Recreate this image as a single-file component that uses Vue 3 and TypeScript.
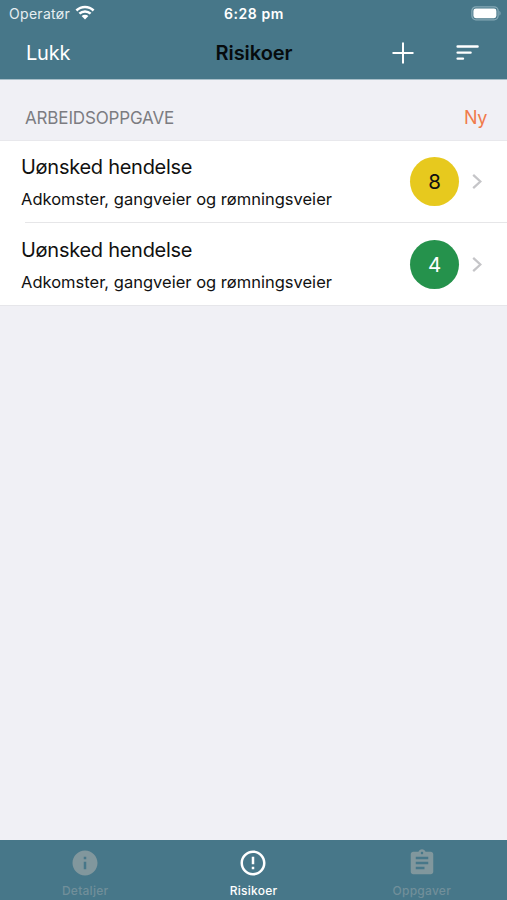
<script setup lang="ts">
interface Risk {
  id: number
  title: string
  detail: string
  score: number
  level: 'medium' | 'low'
}

interface Tab {
  label: string
  path: string
  active: boolean
}

const risks: Risk[] = [
  { id: 1, title: 'Uønsked hendelse', detail: 'Adkomster, gangveier og rømningsveier', score: 8, level: 'medium' },
  { id: 2, title: 'Uønsked hendelse', detail: 'Adkomster, gangveier og rømningsveier', score: 4, level: 'low' },
]

const tabs: Tab[] = [
  {
    label: 'Detaljer',
    path: 'M12 2C6.48 2 2 6.48 2 12s4.48 10 10 10 10-4.48 10-10S17.52 2 12 2zm1 15h-2v-6h2v6zm0-8h-2V7h2v2z',
    active: false,
  },
  {
    label: 'Risikoer',
    path: 'M11 15h2v2h-2zm0-8h2v6h-2zm.99-5C6.47 2 2 6.48 2 12s4.47 10 9.99 10C17.52 22 22 17.52 22 12S17.52 2 11.99 2zM12 20c-4.42 0-8-3.58-8-8s3.58-8 8-8 8 3.58 8 8-3.58 8-8 8z',
    active: true,
  },
  {
    label: 'Oppgaver',
    path: 'M19 3h-4.18C14.4 1.84 13.3 1 12 1c-1.3 0-2.4.84-2.82 2H5c-1.1 0-2 .9-2 2v14c0 1.1.9 2 2 2h14c1.1 0 2-.9 2-2V5c0-1.1-.9-2-2-2zm-7 0c.55 0 1 .45 1 1s-.45 1-1 1-1-.45-1-1 .45-1 1-1zm2 14H7v-2h7v2zm3-4H7v-2h10v2zm0-4H7V7h10v2z',
    active: false,
  },
]
</script>

<template>
  <div class="screen">
    <header class="header">
      <div class="status">
        <div class="carrier">
          <span class="carrier-name">Operatør</span>
          <svg class="wifi" viewBox="0 0 20 15" width="20" height="15">
            <path d="M1.4 5.5a12.4 12.4 0 0 1 17.2 0M4.4 8.7a8 8 0 0 1 11.2 0" fill="none" stroke="#fff" stroke-width="2.5" />
            <path d="M6.6 11.1a4.9 4.9 0 0 1 6.8 0L10 14.5z" fill="#fff" />
          </svg>
        </div>
        <span class="time">6:28 pm</span>
        <svg class="battery" viewBox="0 0 31 15" width="31" height="15">
          <rect x="0.9" y="0.8" width="26.2" height="13" rx="4" fill="none" stroke="#86a9b6" stroke-width="1.3" />
          <rect x="2.4" y="2.5" width="23" height="9.7" rx="2.4" fill="#fff" />
          <path d="M28.4 5c1.6.6 1.6 4 0 4.6z" fill="#86a9b6" />
        </svg>
      </div>
      <nav class="nav">
        <span class="close">Lukk</span>
        <h1 class="title">Risikoer</h1>
        <div class="actions">
          <svg viewBox="0 0 22 22" width="22" height="22">
            <path d="M11 0.5v21M0.5 11h21" stroke="#fff" stroke-width="2" />
          </svg>
          <svg viewBox="0 0 23 16" width="23" height="16">
            <path d="M1.6 1.5h20M1.6 7.6h13M1.6 13.6h5.4" stroke="#fff" stroke-width="2.4" stroke-linecap="round" />
          </svg>
        </div>
      </nav>
    </header>

    <main class="content">
      <div class="section-head">
        <h2 class="section-title">ARBEIDSOPPGAVE</h2>
        <span class="new">Ny</span>
      </div>
      <ul class="list">
        <li v-for="risk in risks" :key="risk.id" class="row">
          <div class="row-text">
            <span class="row-title">{{ risk.title }}</span>
            <span class="row-detail">{{ risk.detail }}</span>
          </div>
          <span class="badge" :class="risk.level">{{ risk.score }}</span>
          <svg class="chevron" viewBox="0 0 10 16" width="10" height="16">
            <path d="M1.2 0.9 8.4 7.5l-7.2 6.6" fill="none" stroke="#c5c5c8" stroke-width="2.3" />
          </svg>
        </li>
      </ul>
    </main>

    <footer class="tabs">
      <div v-for="tab in tabs" :key="tab.label" class="tab" :class="{ active: tab.active }">
        <svg viewBox="0 0 24 24" width="30" height="30"><path :d="tab.path" fill="currentColor" /></svg>
        <span class="tab-label">{{ tab.label }}</span>
      </div>
    </footer>
  </div>
</template>

<style>
body {
  margin: 0;
}
</style>

<style scoped>
.screen {
  display: flex;
  flex-direction: column;
  height: 900px;
  background: #f0f0f5;
  color: #111;
  font-family: Inter, "Liberation Sans", sans-serif;
  overflow: hidden;
}
.header {
  box-sizing: border-box;
  height: 80px;
  background: #477789;
  border-bottom: 1px solid #a9bfc9;
  color: #fff;
}
.status,
.nav {
  display: grid;
  grid-template-columns: 1fr auto 1fr;
  align-items: center;
}
.status {
  height: 27px;
  padding: 0 5px 0 9px;
}
.carrier {
  display: flex;
  align-items: center;
  gap: 5px;
}
.carrier-name {
  width: 61px;
  font-size: 14px;
  letter-spacing: 0.3px;
  color: #e6eef1;
  white-space: nowrap;
}
.wifi {
  margin-top: -3px;
}
.time {
  padding-right: 3px;
  font-size: 14px;
  font-weight: 600;
  letter-spacing: 0.6px;
}
.battery {
  justify-self: end;
}
.nav {
  height: 52px;
  padding: 0 28px 0 26px;
}
.close {
  font-size: 20px;
  letter-spacing: -0.2px;
}
.title {
  margin: 0;
  padding-left: 3px;
  font-size: 20px;
  font-weight: 600;
  letter-spacing: -0.05px;
  color: #060b0d;
}
.actions {
  display: flex;
  align-items: center;
  justify-content: flex-end;
  gap: 42px;
  margin-top: -1px;
}
.section-head {
  display: flex;
  align-items: center;
  justify-content: space-between;
  box-sizing: border-box;
  height: 61px;
  padding: 14px 20px 0 25px;
}
.section-title {
  margin: 0;
  font-size: 17px;
  font-weight: 400;
  letter-spacing: -0.15px;
  color: #7c7c81;
}
.new {
  font-size: 18px;
  letter-spacing: -0.4px;
  color: #f07b4b;
}
.list {
  margin: 0;
  padding: 0;
  list-style: none;
  background: #fff;
  box-shadow: 0 -1px #e8e8ec, 0 1px #e6e6ea;
}
.row {
  position: relative;
  display: flex;
  align-items: center;
  box-sizing: border-box;
  height: 81px;
  padding: 0 25px 0 21px;
}
.row + .row {
  height: 83px;
  padding-top: 2px;
}
.row + .row::before {
  content: "";
  position: absolute;
  top: 0;
  left: 25px;
  right: 0;
  height: 1px;
  background: #e6e6e8;
}
.row-text {
  display: flex;
  flex: 1;
  flex-direction: column;
  gap: 8px;
  padding-top: 1px;
}
.row-title {
  font-size: 20px;
  line-height: 26px;
  letter-spacing: -0.27px;
}
.row-detail {
  font-size: 16.5px;
  line-height: 22px;
  letter-spacing: 0.01px;
}
.badge {
  display: flex;
  align-items: center;
  justify-content: center;
  width: 49px;
  height: 49px;
  margin-right: 13px;
  border-radius: 50%;
  font-size: 20.5px;
}
.medium {
  background: #e7c91e;
}
.low {
  background: #25924c;
  color: #fff;
}
.tabs {
  display: grid;
  grid-template-columns: repeat(3, 1fr);
  box-sizing: border-box;
  height: 60px;
  margin-top: auto;
  padding: 0 1px;
  background: #477789;
}
.tab {
  display: flex;
  flex-direction: column;
  align-items: center;
  padding-top: 8px;
  color: #81979d;
}
.tab-label {
  margin-top: 4px;
  font-size: 12px;
  font-weight: 500;
  line-height: 18px;
  letter-spacing: 0.25px;
  color: #718f9a;
}
.active,
.active .tab-label {
  color: #fff;
}
</style>
